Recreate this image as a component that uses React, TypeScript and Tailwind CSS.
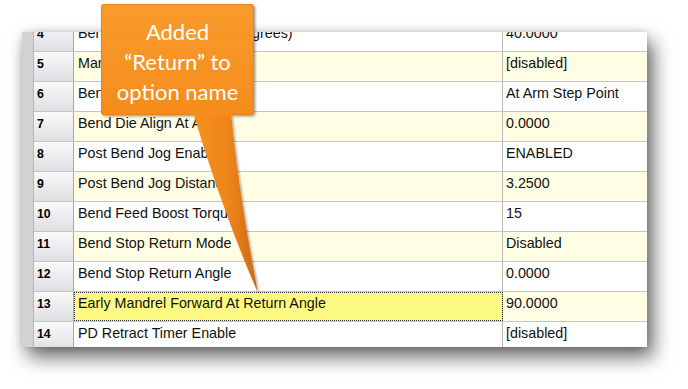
import React from "react";

type Row = { n: number; name: string; value: string; selected?: boolean };

const rows: Row[] = [
  { n: 4, name: "Bend Arm Return Angle (degrees)", value: "40.0000" },
  { n: 5, name: "Mandrel Retract Delay", value: "[disabled]" },
  { n: 6, name: "Bend Arm Step Mode", value: "At Arm Step Point" },
  { n: 7, name: "Bend Die Align At Angle", value: "0.0000" },
  { n: 8, name: "Post Bend Jog Enable", value: "ENABLED" },
  { n: 9, name: "Post Bend Jog Distance", value: "3.2500" },
  { n: 10, name: "Bend Feed Boost Torque", value: "15" },
  { n: 11, name: "Bend Stop Return Mode", value: "Disabled" },
  { n: 12, name: "Bend Stop Return Angle", value: "0.0000" },
  { n: 13, name: "Early Mandrel Forward At Return Angle", value: "90.0000", selected: true },
  { n: 14, name: "PD Retract Timer Enable", value: "[disabled]" },
];

function Callout() {
  return (
    <svg
      className="absolute left-0 top-0 pointer-events-none"
      width={688}
      height={389}
      viewBox="0 0 688 389"
    >
      <defs>
        <linearGradient id="boxg" x1="0" y1="0" x2="0" y2="1">
          <stop offset="0" stopColor="#f99b2c" />
          <stop offset="1" stopColor="#f58c1d" />
        </linearGradient>
        <linearGradient id="ptrg" x1="0" y1="0" x2="1" y2="0">
          <stop offset="0" stopColor="#f6901f" />
          <stop offset="0.55" stopColor="#ee861b" />
          <stop offset="1" stopColor="#c86812" />
        </linearGradient>
        <filter id="ds" x="-20%" y="-20%" width="140%" height="140%">
          <feDropShadow dx="1.5" dy="1.5" stdDeviation="1.2" floodColor="#000" floodOpacity="0.35" />
        </filter>
      </defs>
      <g filter="url(#ds)">
        <path d="M193,112 Q222,210 258,293 Q238,190 231,112 Z" fill="url(#ptrg)" />
        <rect x="101" y="4" width="153" height="111" rx="3" fill="url(#boxg)" />
        <rect x="101.5" y="4.5" width="152" height="110" rx="3" fill="none" stroke="#e7811a" strokeWidth="1" />
        <path d="M194,114 L230,114" stroke="#f58c1d" strokeWidth="2" />
      </g>
    </svg>
  );
}

export default function App() {
  return (
    <div
      className="relative w-[688px] h-[389px] bg-white overflow-hidden"
      style={{ fontFamily: '"Liberation Sans", Arial, sans-serif' }}
    >
      <div className="pt-[32px] pl-[22px]">
        <div className="flex w-[625px] h-[315px] overflow-hidden bg-white shadow-[6px_10px_18px_rgba(0,0,0,0.6),0_0_7px_rgba(0,0,0,0.14)]">
          <div className="w-[11px] shrink-0 bg-[#d2d2d2]" />
          <div className="w-[1px] shrink-0 bg-[#a9b9cd]" />
          <div className="flex-1 flex flex-col -mt-[10px]">
            {rows.map((r) => {
              const stripe = r.n % 2 === 1 ? "bg-[#fffde3]" : "bg-white";
              return (
                <div key={r.n} className="flex h-[30px] shrink-0 border-b border-[#c6c6c6]">
                  <div className="w-[40px] shrink-0 border-r border-[#a8a8a8] bg-gradient-to-b from-[#fafafa] to-[#dfdfe3] flex items-center pl-[3px] pb-[4px] text-[12.3px] font-bold text-black">
                    {r.n}
                  </div>
                  <div
                    className={
                      "w-[429px] shrink-0 border-r border-[#b9b9b9] flex items-center pb-[5px] text-[14.3px] text-[#111] whitespace-nowrap overflow-hidden " +
                      (r.selected ? "bg-[#fcfa82] outline outline-1 outline-dotted outline-[#333] -outline-offset-1 pl-[4px]" : stripe + " pl-[4px]")
                    }
                  >
                    {r.name}
                  </div>
                  <div className={"flex-1 flex items-center pl-[3px] pb-[5px] text-[14.3px] text-[#111] whitespace-nowrap " + stripe}>
                    {r.value}
                  </div>
                </div>
              );
            })}
          </div>
        </div>
      </div>
      <Callout />
      <div
        className="absolute left-[101px] top-[17px] w-[153px] text-center text-white text-[22px] leading-[30px]"
        style={{ fontFamily: 'Lato, "Open Sans", sans-serif' }}
      >
        <div>Added</div>
        <div>“Return” to</div>
        <div>option name</div>
      </div>
    </div>
  );
}
